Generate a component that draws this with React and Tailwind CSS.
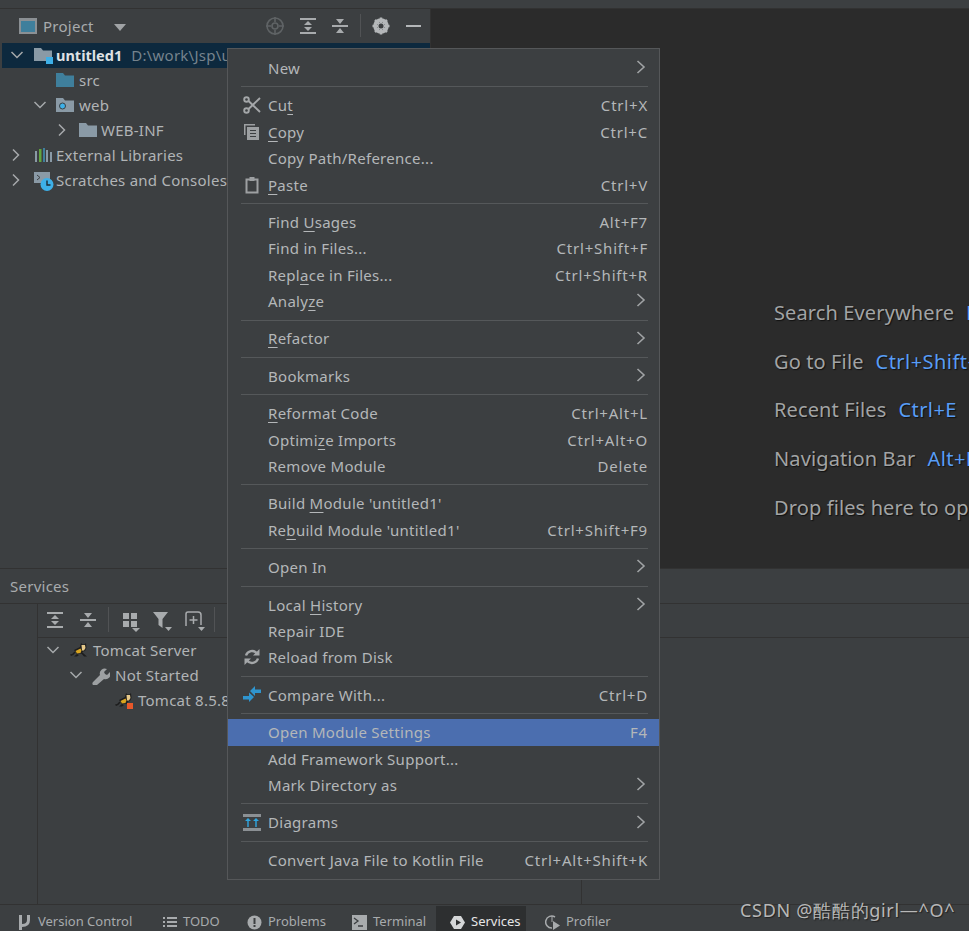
const font = "font-['Noto_Sans','Noto_Sans_CJK_SC',sans-serif]";

// `_` marks the mnemonic letter
const Label = ({ text }) => {
  const i = text.indexOf("_");
  if (i < 0) return <span>{text}</span>;
  return (
    <span>
      {text.slice(0, i)}
      <u className="underline-offset-[3px]">{text[i + 1]}</u>
      {text.slice(i + 2)}
    </span>
  );
};

const Down = () => (
  <svg width="14" height="14" viewBox="0 0 14 14" fill="none" stroke="#a6a9ab" strokeWidth="1.500"><path d="M1.500 4l5.500 5.500L12.500 4" /></svg>
);
const Right = () => (
  <svg width="14" height="14" viewBox="0 0 14 14" fill="none" stroke="#a6a9ab" strokeWidth="1.500"><path d="M4 1.500L9.500 7 4 12.500" /></svg>
);

const Folder = ({ color = "#8a9aa6", className = "" }) => (
  <svg width="18" height="16" viewBox="0 0 18 16" className={className}>
    <path d="M0 1h7l2 2.500h9V15H0z" fill={color} />
  </svg>
);

const Tomcat = ({ stop }) => (
  <svg width="19" height="17" viewBox="0 0 19 17">
    <path d="M0 12.500q3-.5 4.500-3l1 1Q4 13 1 14z" fill="#1d1d1d" />
    <path d="M4 8l6-3 1-4 1.500 1.500h2L16 1l.5 5-1.500 3-2 .5-1 2-5 .5z" fill="#1d1d1d" />
    <path d="M5.500 9l5-2.500 1 2 -1 2.500-3.500.5z" fill="#d9a520" />
    <path d="M11.500 3h3.500l.5 3-1.500 2.500h-2z" fill="#e6c98a" />
    <path d="M7 12l-3 2.500h3l2-1.500zM11 11l3 3.500h3l-4-3.500z" fill="#1d1d1d" />
    {stop && <rect x="12" y="11" width="6" height="6" fill="#e8582a" />}
  </svg>
);

const Cut = () => (
  <svg width="18" height="18" viewBox="0 0 18 18" fill="none" stroke="#a4a7a9" strokeWidth="1.900">
    <circle cx="3.500" cy="3.500" r="2.300" />
    <circle cx="3.500" cy="14.500" r="2.300" />
    <path d="M5.500 5L17 16M5.500 13L17 2" />
  </svg>
);
const Copy = () => (
  <svg width="18" height="18" viewBox="0 0 18 18">
    <path d="M1 1h11v1.500H2.500V12H1z" fill="#9da0a2" />
    <path d="M4 4h12v13H4z" fill="#9da0a2" />
    <path d="M7 7.500h6M7 10.500h6M7 13.500h6" stroke="#3c3f41" strokeWidth="1.200" />
  </svg>
);
const Paste = () => (
  <svg width="18" height="18" viewBox="0 0 18 18" fill="none">
    <path d="M3.500 3.500h11v13h-11z" stroke="#9da0a2" strokeWidth="2" />
    <path d="M6.500 1h5v4h-5z" fill="#9da0a2" />
  </svg>
);
const Reload = () => (
  <svg width="18" height="18" viewBox="0 0 18 18" fill="none" stroke="#a4a7a9" strokeWidth="2.400">
    <path d="M3 7.500a6.300 6.300 0 0 1 11-2M15 10.500a6.300 6.300 0 0 1-11 2" />
    <path d="M16.500 1v6.500H10z" fill="#a4a7a9" stroke="none" />
    <path d="M1.500 17v-6.500H8z" fill="#a4a7a9" stroke="none" />
  </svg>
);
const Compare = () => (
  <svg width="18" height="18" viewBox="0 0 18 18" fill="#2f95cf">
    <path d="M7 5l5-5v3.500l6 0v3.500l-6 0V10zM11 11l-5-4.500V10H0v3.500h6V16z" />
  </svg>
);
const Diagrams = () => (
  <svg width="18" height="18" viewBox="0 0 18 18">
    <path d="M0 1h18v3H0zM0 15h18v3H0z" fill="#8b9094" />
    <path d="M5 14V7M13 14V7" stroke="#2fa6e0" strokeWidth="1.400" />
    <path d="M5 5l3 3H2zM13 5l3 3h-6z" fill="#2fa6e0" />
  </svg>
);

const menu = [
  { t: "New", arrow: true },
  "-",
  { t: "Cu_t", k: "Ctrl+X", icon: <Cut /> },
  { t: "_Copy", k: "Ctrl+C", icon: <Copy /> },
  { t: "Copy Path/Reference..." },
  { t: "_Paste", k: "Ctrl+V", icon: <Paste /> },
  "-",
  { t: "Find _Usages", k: "Alt+F7" },
  { t: "Find in Files...", k: "Ctrl+Shift+F" },
  { t: "Repl_ace in Files...", k: "Ctrl+Shift+R" },
  { t: "Analy_ze", arrow: true },
  "-",
  { t: "_Refactor", arrow: true },
  "-",
  { t: "Bookmarks", arrow: true },
  "-",
  { t: "_Reformat Code", k: "Ctrl+Alt+L" },
  { t: "Optimi_ze Imports", k: "Ctrl+Alt+O" },
  { t: "Remove Module", k: "Delete" },
  "-",
  { t: "Build _Module 'untitled1'" },
  { t: "Re_build Module 'untitled1'", k: "Ctrl+Shift+F9" },
  "-",
  { t: "Open In", arrow: true },
  "-",
  { t: "Local _History", arrow: true },
  { t: "Repair IDE" },
  { t: "Reload from Disk", icon: <Reload /> },
  "-",
  { t: "Compare With...", k: "Ctrl+D", icon: <Compare /> },
  "-",
  { t: "Open Module Settings", k: "F4", active: true },
  { t: "Add Framework Support..." },
  { t: "Mark Directory as", arrow: true },
  "-",
  { t: "Diagrams", arrow: true, icon: <Diagrams /> },
  "-",
  { t: "Convert Java File to Kotlin File", k: "Ctrl+Alt+Shift+K" },
];

const ContextMenu = () => (
  <div className="absolute left-[227px] top-[48px] w-[433px] h-[832px] bg-[#3c3f41] border border-[#555759] pt-[6px] z-10 text-[15px] tracking-[0.28px] text-[#b4b7b9]">
    {menu.map((item, i) =>
      item === "-" ? (
        <div key={i} className="h-[11px] flex items-center pl-[13px] pr-[11px]">
          <div className="h-px w-full bg-[#55585a]" />
        </div>
      ) : (
        <div
          key={i}
          className={`h-[26.400px] relative flex items-center justify-between pl-[40px] pr-[11px] ${item.active ? "bg-[#4b6eaf]" : ""}`}
        >
          {item.icon && <div className="absolute left-[15px] top-[4px]">{item.icon}</div>}
          <Label text={item.t} />
          {item.k && <span className="tracking-[0.8px]">{item.k}</span>}
          {item.arrow && (
            <svg width="10" height="14" viewBox="0 0 10 14" fill="none" stroke="#a0a3a5" strokeWidth="1.600" className="mr-[2px] mb-[2px]">
              <path d="M1.500 1L8 7l-6.500 6" />
            </svg>
          )}
        </div>
      )
    )}
  </div>
);

const TreeRow = ({ left, open, closed, icon, iconLeft, textLeft, children, selected }) => (
  <div className={`h-[25px] relative ${selected ? "bg-[#0d293e]" : ""}`}>
    {(open || closed) && (
      <div className="absolute top-[5px]" style={{ left }}>
        {open ? <Down /> : <Right />}
      </div>
    )}
    <div className="absolute top-[4px]" style={{ left: iconLeft }}>{icon}</div>
    <div className="absolute top-0 leading-[25px] whitespace-nowrap tracking-[0.25px]" style={{ left: textLeft }}>{children}</div>
  </div>
);

const Shortcut = ({ label, keys }) => (
  <div className="h-[48.800px] flex items-center whitespace-nowrap tracking-[0.12px] [text-shadow:1px_1px_1px_#111]">
    {label}
    {keys && <span className="ml-[12px] tracking-[0.45px] text-[#589df6]">{keys}</span>}
  </div>
);

const BottomTab = ({ icon, children, active, className }) => (
  <div className={`absolute top-[1px] h-[26px] pt-[6px] flex items-center gap-[6px] ${active ? "bg-[#2d2f30] text-[#e6e6e6]" : ""} ${className}`}>
    {icon}
    <span>{children}</span>
  </div>
);

export default function App() {
  return (
    <div className={`relative w-[969px] h-[931px] overflow-hidden bg-[#3c3f41] text-[#b1b4b6] text-[15px] ${font}`}>
      <div className="h-[9px] border-b border-[#323232]" />

      <div className="flex h-[559px]">
        {/* project panel */}
        <div className="w-[428px] ml-[2px] relative">
          <div className="h-[34px] relative">
            <svg width="18" height="16" viewBox="0 0 18 16" className="absolute left-[17px] top-[9px]">
              <path d="M0 0h18v16H0z" fill="#8b9094" />
              <path d="M2 3h14v11H2z" fill="#3f7f9c" />
            </svg>
            <span className="absolute left-[41px] top-[6px] tracking-[0.25px] text-[#a8abad]">Project</span>
            <svg width="12" height="7" viewBox="0 0 12 7" className="absolute left-[112px] top-[15px]"><path d="M0 0h12L6 7z" fill="#a0a3a5" /></svg>
            <svg width="20" height="20" viewBox="0 0 20 20" fill="none" stroke="#5f6365" strokeWidth="1.600" className="absolute left-[263px] top-[7px]">
              <circle cx="10" cy="10" r="8" />
              <circle cx="10" cy="10" r="3" />
              <path d="M10 1v5M10 14v5M1 10h5M14 10h5" />
            </svg>
            <svg width="18" height="18" viewBox="0 0 18 18" className="absolute left-[297px] top-[8px]" fill="#a8abad">
              <path d="M1 1h16v2H1zM1 15h16v2H1zM9 4l4 4H5zM9 14l-4-4h8z" />
            </svg>
            <svg width="18" height="18" viewBox="0 0 18 18" className="absolute left-[329px] top-[8px]" fill="#a8abad">
              <path d="M1 8h16v2H1zM5 2h8l-4 5zM9 11l4 5H5z" />
            </svg>
            <div className="absolute left-[358px] top-[5px] w-px h-[23px] bg-[#515355]" />
            <svg width="18" height="18" viewBox="0 0 18 18" className="absolute left-[370px] top-[8px]">
              <circle cx="9" cy="9" r="6" fill="none" stroke="#b4b7b9" strokeWidth="3.500" />
              <path d="M9 .5v17M.5 9h17M3 3l12 12M15 3L3 15" stroke="#b4b7b9" strokeWidth="2.500" />
              <circle cx="9" cy="9" r="2.500" fill="#3c3f41" />
            </svg>
            <div className="absolute left-[404px] top-[16px] w-[15px] h-[2px] bg-[#b4b7b9]" />
          </div>
          <TreeRow
            selected
            open
            left={8}
            iconLeft={32}
            textLeft={54}
            icon={
              <svg width="20" height="18" viewBox="0 0 20 18">
                <path d="M0 1h7l2 2.500h9V14H0z" fill="#8a9aa6" />
                <path d="M12 10h7v7h-7z" fill="#3db0e8" />
              </svg>
            }
          >
            <span className="font-bold tracking-normal text-[14.500px] text-[#dfe1e3]">untitled1</span>
            <span className="ml-[9px] text-[#76838d]">D:\work\Jsp\untitled1</span>
          </TreeRow>
          <TreeRow iconLeft={54} textLeft={77} icon={<Folder color="#3f7f9c" />}>src</TreeRow>
          <TreeRow
            open
            left={31}
            iconLeft={54}
            textLeft={77}
            icon={
              <svg width="18" height="16" viewBox="0 0 18 16">
                <path d="M0 1h7l2 2.500h9V15H0z" fill="#8a9aa6" />
                <circle cx="6.500" cy="9" r="3" fill="#3db0e8" stroke="#3c3f41" />
              </svg>
            }
          >
            web
          </TreeRow>
          <TreeRow closed left={53} iconLeft={77} textLeft={99} icon={<Folder />}>WEB-INF</TreeRow>
          <TreeRow
            closed
            left={7}
            iconLeft={32}
            textLeft={54}
            icon={
              <svg width="18" height="16" viewBox="0 0 18 16">
                <path d="M1 4h2v11H1zM12 3h2v12h-2zM16 5h2v10h-2z" fill="#8a9aa6" />
                <path d="M5 2h2.500v13H5z" fill="#62a53f" />
                <path d="M9 1h2v14H9z" fill="#3f7f9c" />
              </svg>
            }
          >
            External Libraries
          </TreeRow>
          <TreeRow
            closed
            left={7}
            iconLeft={32}
            textLeft={54}
            icon={
              <svg width="20" height="20" viewBox="0 0 20 20">
                <path d="M0 0h16v11H0z" fill="#8a9aa6" />
                <path d="M3 3l3 2.500L3 8" stroke="#3c3f41" fill="none" />
                <circle cx="13" cy="12.500" r="6.500" fill="#3db0e8" />
                <path d="M13 8.500v4.500h3.500" stroke="#1d2a33" strokeWidth="1.400" fill="none" />
              </svg>
            }
          >
            Scratches and Consoles
          </TreeRow>
        </div>

        {/* editor */}
        <div className="flex-1 bg-[#2b2b2b] border-l border-[#323232] relative overflow-hidden">
          <div className="absolute left-[343px] top-[279.500px] text-[20px] text-[#a2a4a5]">
            <Shortcut label="Search Everywhere" keys="Double Shift" />
            <Shortcut label="Go to File" keys="Ctrl+Shift+N" />
            <Shortcut label="Recent Files" keys="Ctrl+E" />
            <Shortcut label="Navigation Bar" keys="Alt+Home" />
            <Shortcut label="Drop files here to open them" />
          </div>
        </div>
      </div>

      {/* services */}
      <div className="h-[363px] border-t border-[#323232] relative">
        <div className="h-[35px] pl-[10px] leading-[34px] tracking-[0.25px] border-b border-[#323232] text-[#a8abad]">Services</div>
        <div className="absolute left-[37px] top-[35px] bottom-[27px] w-px bg-[#323232]" />
        <div className="absolute left-[581px] top-[35px] bottom-[27px] w-px bg-[#323232]" />
        <div className="absolute left-[38px] right-0 top-[68px] h-px bg-[#323232]" />
        <svg width="18" height="18" viewBox="0 0 18 18" className="absolute left-[46px] top-[42px]" fill="#a8abad">
          <path d="M1 1h16v2H1zM1 15h16v2H1zM9 4l4 4H5zM9 14l-4-4h8z" />
        </svg>
        <svg width="18" height="18" viewBox="0 0 18 18" className="absolute left-[79px] top-[42px]" fill="#a8abad">
          <path d="M1 8h16v2H1zM5 2h8l-4 5zM9 11l4 5H5z" />
        </svg>
        <div className="absolute left-[108px] top-[38px] w-px h-[25px] bg-[#515355]" />
        <svg width="20" height="20" viewBox="0 0 20 20" className="absolute left-[121px] top-[43px]" fill="#a8abad">
          <path d="M2 1h6v6H2zM10 1h6v6h-6zM2 9h6v6H2zM10 9h6v6h-6zM11 16h8l-4 4z" />
        </svg>
        <svg width="20" height="20" viewBox="0 0 20 20" className="absolute left-[152px] top-[42px]" fill="#a8abad">
          <path d="M1 1h15l-5.500 7v9l-4-3V8zM13 16h7l-3.500 4z" />
        </svg>
        <svg width="22" height="22" viewBox="0 0 22 22" className="absolute left-[184px] top-[41px]" fill="none" stroke="#a8abad" strokeWidth="1.500">
          <path d="M2 16V4q0-2 2-2h10q3 0 3 3v10" />
          <path d="M9.500 6v8M5.500 10h8" />
          <path d="M14 17h7l-3.500 4z" fill="#a8abad" stroke="none" />
        </svg>
        <div className="absolute left-[214px] top-[38px] w-px h-[25px] bg-[#515355]" />

        <div className="absolute left-[46px] top-[69px] w-[190px]">
          <TreeRow open left={0} iconLeft={24} textLeft={47} icon={<Tomcat />}>Tomcat Server</TreeRow>
          <TreeRow open left={23} iconLeft={46} textLeft={69} icon={
            <svg width="18" height="18" viewBox="0 0 18 18"><path d="M1 15l7-7a5 5 0 0 1 7-6l-3 3 1 2 2 1 3-3a5 5 0 0 1-6 7l-7 6a2 2 0 0 1-4-3z" fill="#9da0a2" /></svg>
          }>Not Started</TreeRow>
          <TreeRow iconLeft={69} textLeft={92} icon={<Tomcat stop />}>Tomcat 8.5.8</TreeRow>
        </div>

        {/* bottom bar */}
        <div className="absolute left-0 right-0 bottom-0 h-[27px] border-t border-[#323232] text-[13px] text-[#a8abad]">
          <BottomTab className="left-[18px]" icon={
            <svg width="14" height="15" viewBox="0 0 14 15"><path d="M1 0h3v15H1zM4 9q5 0 5-4V0h3v5q0 7-8 7z" fill="#a8abad" /></svg>
          }>Version Control</BottomTab>
          <BottomTab className="left-[163px]" icon={
            <svg width="14" height="12" viewBox="0 0 14 12"><path d="M0 1h2v2H0zM4 1h10v2H4zM0 5h2v2H0zM4 5h10v2H4zM0 9h2v2H0zM4 9h10v2H4z" fill="#a8abad" /></svg>
          }>TODO</BottomTab>
          <BottomTab className="left-[247px]" icon={
            <svg width="15" height="15" viewBox="0 0 15 15"><circle cx="7.500" cy="7.500" r="7" fill="#a8abad" /><path d="M6.500 3h2v6h-2zM6.500 10h2v2h-2z" fill="#3c3f41" /></svg>
          }>Problems</BottomTab>
          <BottomTab className="left-[352px]" icon={
            <svg width="15" height="15" viewBox="0 0 15 15"><path d="M0 0h15v15H0z" fill="#a8abad" /><path d="M2 3l4 3-4 3M6 11h5" stroke="#3c3f41" strokeWidth="1.300" fill="none" /></svg>
          }>Terminal</BottomTab>
          <BottomTab active className="left-[436px] w-[90px] pl-[14px]" icon={
            <svg width="15" height="15" viewBox="0 0 15 15"><path d="M4 1h7l4 6.500L11 14H4L0 7.500z" fill="#d5d7d8" /><path d="M6 4.500l5 3-5 3z" fill="#2d2f30" /></svg>
          }>Services</BottomTab>
          <BottomTab className="left-[545px]" icon={
            <svg width="15" height="16" viewBox="0 0 15 16" fill="none"><path d="M10 3a6 6 0 1 0-3 11" stroke="#a8abad" strokeWidth="1.500" /><path d="M7 2v6" stroke="#a8abad" /><path d="M8 7l7 4.500L8 16z" fill="#a8abad" /></svg>
          }>Profiler</BottomTab>
        </div>
      </div>

      <ContextMenu />

      <div className="absolute left-[740px] top-[897px] font-['Liberation_Sans','Noto_Sans_CJK_SC',sans-serif] text-[18px] tracking-[0.7px] text-[#b8b8b8] [text-shadow:1px_1px_1px_#222] whitespace-nowrap z-20">CSDN @酷酷的girl—^O^</div>
    </div>
  );
}
